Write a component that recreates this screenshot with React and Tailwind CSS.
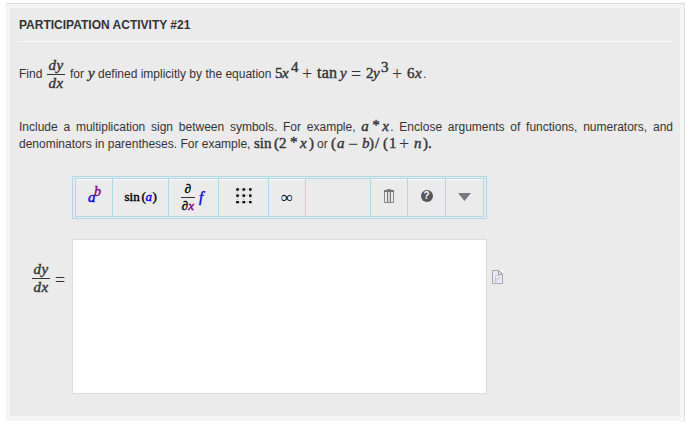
import React from "react";

const KIND = {
  i: "italic leading-[17px]",
  r: "leading-[17px]",
  b: "text-[16px] tracking-[0.2px] leading-[14px]",
  o: "relative top-[1.5px] text-[18px] leading-[8px] [-webkit-text-stroke:0px]",
  s: "relative -top-[6px] leading-[17px]",
  a: "relative -top-px leading-[17px]",
};

// Each glyph is [text, advance in px, kind].
function Formula({ glyphs, className = "" }) {
  return (
    <span
      className={
        "inline-flex items-baseline whitespace-pre font-['Liberation_Serif',serif] text-[15px] leading-[17px] [-webkit-text-stroke:0.4px] " +
        className
      }
    >
      {glyphs.map(([text, width, kind], k) => (
        <span key={k} className={"block shrink-0 " + KIND[kind || "r"]} style={{ width }}>
          {text}
        </span>
      ))}
    </span>
  );
}

function Fraction({ top, bottom, className = "" }) {
  return (
    <span
      className={
        "inline-flex shrink-0 flex-col items-center font-['Liberation_Serif',serif] text-[15px] italic leading-[17px] [-webkit-text-stroke:0.4px] " +
        className
      }
    >
      <span className="tracking-[0.5px]">{top}</span>
      <span className="h-px w-full bg-[#333]" />
      <span className="tracking-[0.5px]">{bottom}</span>
    </span>
  );
}

function Cell({ className, plain, last, children }) {
  return (
    <div
      className={
        "flex h-[37px] shrink-0 items-center justify-center box-content " +
        (last ? "" : "border-r border-[#add8e6] ") +
        (plain ? "" : "shadow-[inset_0_1px_0_#fcfcfc] ") +
        className
      }
    >
      {children}
    </div>
  );
}

function GridIcon() {
  return (
    <svg width="18" height="18" className="-mt-[3px]">
      <path d="M2 2.500h13M2 8.500h13M2 15.500h13M2.500 2v13M8.500 2v13M15.500 2v13" stroke="#bbb" strokeDasharray="1 1" fill="none" />
      {[1.3, 7.5, 14].map((y) =>
        [1.2, 7.5, 14].map((x) => <rect key={x + "-" + y} x={x} y={y} width="2.600" height="2.300" fill="#000" />)
      )}
    </svg>
  );
}

function TrashIcon() {
  return (
    <svg width="12" height="14" viewBox="0 0 12 14" className="-mt-[3px]" fill="none">
      <path d="M4 .5h4" stroke="#888" />
      <path d="M1 2h10" strokeWidth="2" stroke="#777" />
      <path d="M1.500 3v10.500h9V3" stroke="#888" />
      <path d="M4.500 3v10M7.500 3v10" stroke="#777" />
      <path d="M6 3v10" stroke="#bbb" />
    </svg>
  );
}

function DocIcon() {
  return (
    <svg width="11" height="14" viewBox="0 0 11 14" className="block shrink-0">
      <path d="M.5.5h6l4 4v9H.5z" fill="#e8e8f6" stroke="#a8a8a8" />
      <path d="M6.500.5v4h4" fill="none" stroke="#999" />
      <path d="M7 0h4v4z" fill="#f6f6f6" />
      <path d="M7 .5l3.500 3.500" stroke="#aaa" />
      <path d="M3.500 11.500v-6h2.500c2.200 0 2.200 3.500 0 3.500H3.500M2.500 11.500h3" fill="none" stroke="#c6c6de" />
    </svg>
  );
}

export default function App() {
  return (
    <div className="h-[422px] w-[685px] overflow-hidden bg-white pl-[6px] pt-[3px] font-['Liberation_Sans',sans-serif] text-[12px] leading-[17px] text-[#333]">
      <div className="h-[418px] w-[679px] border-r border-t border-[#dcdcdc] bg-[#f5f5f5] pl-[4px] pt-[4px]">
        <div className="h-[408px] w-[670px] bg-[#ebebeb] pl-[8px]">
          <h1 className="h-[34px] w-[655px] border-b border-[#f9f9f9] pl-[1px] pt-[9px] text-[12px] font-bold">
            PARTICIPATION ACTIVITY #21
          </h1>

          <div className="flex h-[60px] items-center whitespace-pre pl-[1px] pt-[4px]">
            <span className="w-[28px]">Find</span>
            <Fraction top="dy" bottom="dx" className="w-[18px]" />
            <span className="flex items-baseline pl-[5px]">
              <span className="w-[18px]">for</span>
              <Formula glyphs={[["y", 10, "i"]]} />
              <span className="w-[177px]">defined implicitly by the equation</span>
              <Formula
                glyphs={[
                  ["5", 7], ["x", 9, "i"], ["4", 11, "s"], ["+", 15, "o"], ["tan", 23, "b"], ["y", 11, "i"],
                  ["=", 15, "o"], ["2", 7], ["y", 8, "i"], ["3", 11, "s"], ["+", 15, "o"], ["6", 8], ["x", 8, "i"],
                ]}
              />
              <span>.</span>
            </span>
          </div>

          <div className="h-[51px] w-[655px] pl-[1px] pt-[16px]">
            <p className="h-[17px] w-[654px] text-justify [text-align-last:justify]">
              Include a multiplication sign between symbols. For example,{" "}
              <Formula glyphs={[["a", 11, "i"], ["*", 10, "a"], ["x", 8, "i"]]} />. Enclose arguments of functions,
              numerators, and
            </p>
            <p className="flex h-[17px] items-baseline whitespace-pre">
              <span className="w-[235px]">denominators in parentheses. For example,</span>
              <Formula glyphs={[["sin", 20], ["(", 5], ["2", 11], ["*", 10, "a"], ["x", 9, "i"], [")", 8]]} />
              <span className="w-[14px]">or</span>
              <Formula
                glyphs={[
                  ["(", 6], ["a", 11, "i"], ["−", 14, "o"], ["b", 7, "i"], [")", 6], ["/", 8], ["(", 6], ["1", 10],
                  ["+", 15, "o"], ["n", 9, "i"], [")", 5], [".", 4],
                ]}
              />
            </p>
          </div>

          <div className="ml-[54px] mt-[23px] h-[43px] w-[415px] border border-[#add8e6] pl-[2px] pt-px">
            <div className="flex h-[39px] w-[409px] border border-[#add8e6] text-black">
              <Cell className="w-[36px]">
                <Formula
                  glyphs={[
                    [<span key="a" className="text-[#00f]">a</span>, 6, "i"],
                    [<i key="b" className="text-[14px] text-[#800080]">b</i>, 6, "s"],
                  ]}
                />
              </Cell>
              <Cell className="w-[55px]">
                <Formula
                  className="-mt-[2px] !text-[13px]"
                  glyphs={[["sin", 17], ["(", 4], [<span key="a" className="text-[#00f]">a</span>, 7, "i"], [")", 4]]}
                />
              </Cell>
              <Cell className="w-[49px]">
                <span className="flex items-center gap-[4px]">
                  <Fraction
                    className="w-[14px] !text-[13px] !leading-[16px] text-black"
                    top="∂"
                    bottom={<>∂<span className="text-[#800080]">x</span></>}
                  />
                  <Formula className="text-[#00f]" glyphs={[["f", 7, "i"]]} />
                </span>
              </Cell>
              <Cell className="w-[49px]"><GridIcon /></Cell>
              <Cell className="w-[36px]">
                <Formula className="!text-[17px] ![-webkit-text-stroke:0px]" glyphs={[["∞", 12]]} />
              </Cell>
              <Cell plain className="w-[64px]" />
              <Cell className="w-[36px]"><TrashIcon /></Cell>
              <Cell className="w-[37px]">
                <span className="-mt-[4px] flex size-[12px] items-center justify-center rounded-full bg-[#55565a] text-[10px] font-bold leading-[12px] text-white">?</span>
              </Cell>
              <Cell last className="w-[37px]">
                <svg width="13" height="8" className="-mt-[2px]"><path d="M0 0h13L6.500 8z" fill="#777b80" /></svg>
              </Cell>
            </div>
          </div>

          <div className="mt-[20px] flex items-start">
            <div className="flex h-[78px] w-[54px] shrink-0 items-center pl-[14px]">
              <Fraction top="dy" bottom="dx" className="w-[18px]" />
              <Formula className="pl-[5px]" glyphs={[["=", 10, "o"]]} />
            </div>
            <div className="h-[155px] w-[415px] shrink-0 border border-[#ddd] bg-white" />
            <div className="pl-[5px] pt-[31px]"><DocIcon /></div>
          </div>
        </div>
      </div>
    </div>
  );
}
